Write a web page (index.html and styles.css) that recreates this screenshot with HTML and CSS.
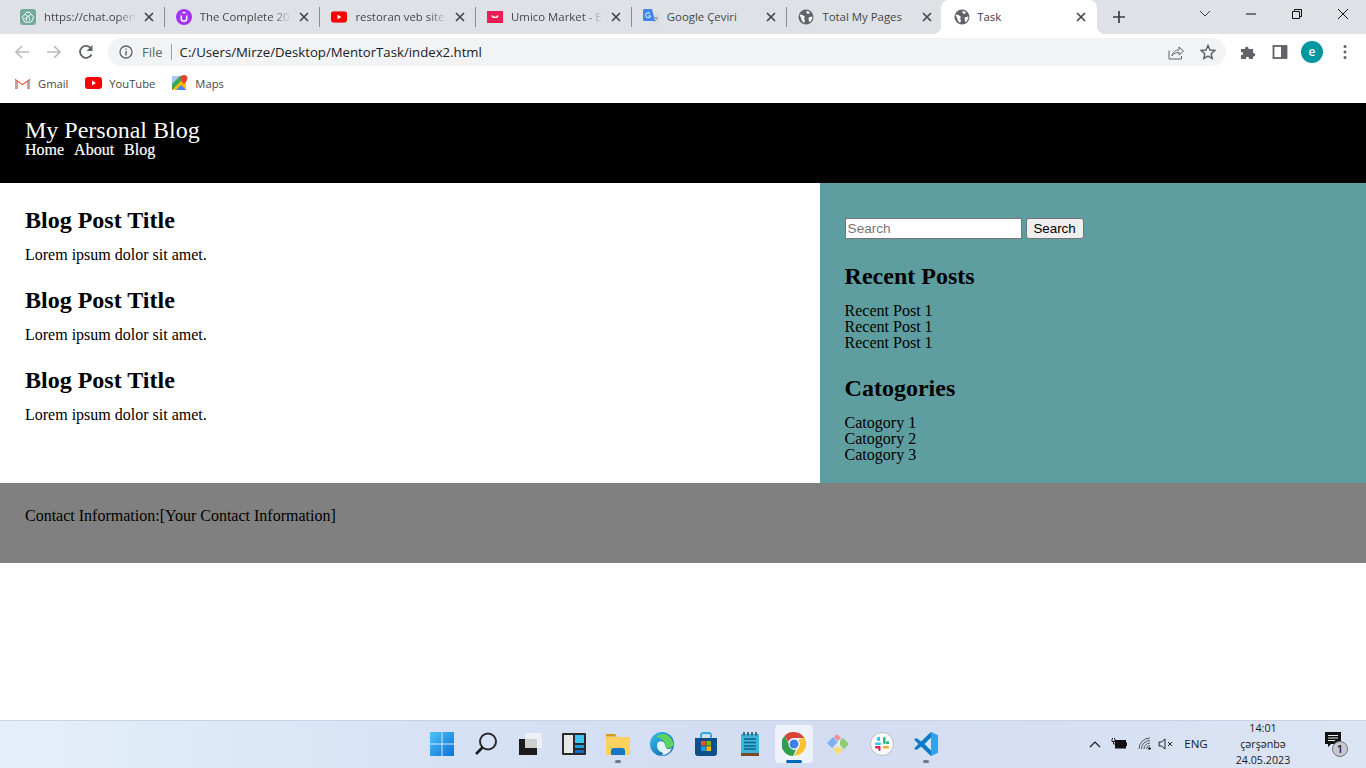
FILE: index.html
```html
<!DOCTYPE html>
<html lang="en">
<head>
  <meta charset="UTF-8">
  <meta name="viewport" content="width=device-width, initial-scale=1.0">
  <title>Task</title>
  <link rel="stylesheet" href="styles.css">
</head>
<body>
  <svg class="defs" width="0" height="0">
    <symbol id="globe" viewBox="0 0 16 16">
      <circle cx="8" cy="8" r="7.500" fill="#5f6368"/>
      <path d="M1.500 5.500l3 .5 2.500 2-1 1.500 1 2-1 2.500-2-2-1-3zM8.500 2l2.500.5 1 1.500-2 1-1.500-1zM10.500 8.500l3.500-1 .5 1.500-2 3.500-1.500.5z" fill="#fff"/>
    </symbol>
    <symbol id="yt" viewBox="0 0 17 12">
      <rect width="17" height="12" rx="3" fill="#f00"/>
      <path d="M7 3.500v5l4-2.500z" fill="#fff"/>
    </symbol>
    <symbol id="close" viewBox="0 0 10 10">
      <path d="M1 1l8 8M9 1l-8 8" stroke="#45474a" stroke-width="1.700" fill="none"/>
    </symbol>
  </svg>

  <div class="tabstrip">
    <div class="tab">
      <svg class="fav" viewBox="0 0 16 16"><rect width="16" height="16" rx="3" fill="#74aa9c"/><path d="M8 3a3 3 0 0 1 3 2.500 3 3 0 0 1 1.500 5A3 3 0 0 1 8 13a3 3 0 0 1-4.500-2.500 3 3 0 0 1 1.500-5A3 3 0 0 1 8 3z" fill="none" stroke="#fff"/><path d="M5 5.500l4.500 2.500v4M11 5.500L6.500 8v4M3.500 10.500L8 8" fill="none" stroke="#fff" stroke-width=".7"/></svg>
      <span class="tab-title">https://chat.open</span>
      <svg class="tab-x"><use href="#close"/></svg>
    </div>
    <div class="tab">
      <svg class="fav" viewBox="0 0 16 16"><circle cx="8" cy="8" r="8" fill="#a435f0"/><path d="M5.300 6.500v3.200c0 3.400 5.400 3.400 5.400 0V6.500" fill="none" stroke="#fff" stroke-width="1.500"/><path d="M8 2.500l2.700 1.700H5.300z" fill="#fff"/></svg>
      <span class="tab-title">The Complete 20</span>
      <svg class="tab-x"><use href="#close"/></svg>
    </div>
    <div class="tab">
      <svg class="fav" viewBox="0 0 17 12"><use href="#yt"/></svg>
      <span class="tab-title">restoran veb site</span>
      <svg class="tab-x"><use href="#close"/></svg>
    </div>
    <div class="tab">
      <svg class="fav" viewBox="0 0 16 16"><rect y="2" width="16" height="12" fill="#ec1c54"/><path d="M5 6.500c.5 2.500 5.500 2.500 6 0" fill="none" stroke="#fff" stroke-width="1.300"/></svg>
      <span class="tab-title">Umico Market - E</span>
      <svg class="tab-x"><use href="#close"/></svg>
    </div>
    <div class="tab">
      <svg class="fav" viewBox="0 0 16 16"><path d="M7 4h9v12H9z" fill="#dadce0"/><path d="M1 0h8l3 12H1a1 1 0 0 1-1-1V1a1 1 0 0 1 1-1z" fill="#4285f4"/><path d="M7 4.500a2.500 2.500 0 1 0 .6 2.400H5.500" fill="none" stroke="#fff" stroke-width="1"/><path d="M11 9h4M13 8v1M14 9c-.5 2-2 3-3 3.500" fill="none" stroke="#80868b" stroke-width=".8"/></svg>
      <span class="tab-title tab-full">Google Çeviri</span>
      <svg class="tab-x"><use href="#close"/></svg>
    </div>
    <div class="tab">
      <svg class="fav"><use href="#globe"/></svg>
      <span class="tab-title tab-full">Total My Pages</span>
      <svg class="tab-x"><use href="#close"/></svg>
    </div>
    <div class="tab tab-active">
      <svg class="fav"><use href="#globe"/></svg>
      <span class="tab-title tab-full">Task</span>
      <svg class="tab-x"><use href="#close"/></svg>
    </div>
    <svg class="new-tab" viewBox="0 0 12 12"><path d="M6 0v12M0 6h12" stroke="#3c4043" stroke-width="1.700"/></svg>
    <div class="win-controls">
      <svg class="win-btn" viewBox="0 0 46 16"><path d="M18 5l5 5 5-5" fill="none" stroke="#3c4043"/></svg>
      <svg class="win-btn" viewBox="0 0 46 16"><path d="M18 8h10" stroke="#111" stroke-width="1"/></svg>
      <svg class="win-btn" viewBox="0 0 46 16"><path d="M18.500 5.500h7v7h-7zM20.500 5.500v-2h7v7h-2" fill="none" stroke="#111"/></svg>
      <svg class="win-btn" viewBox="0 0 46 16"><path d="M18 3l10 10M28 3L18 13" stroke="#111"/></svg>
    </div>
  </div>

  <div class="toolbar">
    <svg class="nav-btn" viewBox="0 0 16 16"><path d="M15 8H2M8 2L2 8l6 6" fill="none" stroke="#babcbe" stroke-width="1.700"/></svg>
    <svg class="nav-btn" viewBox="0 0 16 16"><path d="M1 8h13M8 2l6 6-6 6" fill="none" stroke="#babcbe" stroke-width="1.700"/></svg>
    <svg class="nav-btn" viewBox="0 0 16 16"><path d="M13.500 10.500A6 6 0 1 1 13 4.500" fill="none" stroke="#5f6368" stroke-width="1.800"/><path d="M14.500 1v6h-6z" fill="#5f6368"/></svg>
    <div class="omnibox">
      <svg class="info" viewBox="0 0 14 14"><circle cx="7" cy="7" r="6" fill="none" stroke="#5f6368" stroke-width="1.300"/><path d="M7 6v4.500M7 3.500v1.300" stroke="#5f6368" stroke-width="1.400"/></svg>
      <span class="scheme">File</span>
      <span class="url">C:/Users/Mirze/Desktop/MentorTask/index2.html</span>
      <svg class="omni-icon" viewBox="0 0 16 16"><path d="M1 6.500V15h12.500v-3" fill="none" stroke="#5f6368"/><path d="M4 12c.5-4 3.500-6 7-6V3l4.500 4-4.500 4V8.500C8 8.300 5.500 9.500 4 12z" fill="none" stroke="#5f6368"/></svg>
      <svg class="omni-icon" viewBox="0 0 16 16"><path d="M8 1.500l2 4.500 4.800.5-3.600 3.200 1 4.800L8 12.100l-4.200 2.400 1-4.800L1.200 6.500 6 6z" fill="none" stroke="#5f6368" stroke-width="1.500"/></svg>
    </div>
    <svg class="tool-icon" viewBox="0 0 16 16"><path d="M1 5h4c-.5-3 4-3 3.500 0H13v4c3-.5 3 4 0 3.500V15H9c.5-3-3.500-3-3 0H1v-4c3 .5 3-3.500 0-3z" fill="#5f6368"/></svg>
    <svg class="tool-icon" viewBox="0 0 16 16"><rect x="1.500" y="2" width="13" height="12" fill="none" stroke="#5f6368" stroke-width="1.800"/><rect x="9" y="2" width="6" height="12" fill="#5f6368"/></svg>
    <span class="avatar">e</span>
    <svg class="menu-dots" viewBox="0 0 4 16"><circle cx="2" cy="2.500" r="1.500" fill="#5f6368"/><circle cx="2" cy="8" r="1.500" fill="#5f6368"/><circle cx="2" cy="13.500" r="1.500" fill="#5f6368"/></svg>
  </div>

  <div class="bookmarks">
    <span class="bookmark">
      <svg class="bm-gmail" viewBox="0 0 16 12"><path d="M0 12V1.500L8 7l8-5.500V12h-3V5L8 8.500 3 5v7z" fill="#ea4335"/><path d="M0 12h3V5L0 2.500z" fill="#c5a5a0"/><path d="M13 12h3V2.500L13 5z" fill="#c5a5a0"/></svg>
      Gmail
    </span>
    <span class="bookmark">
      <svg class="bm-yt" viewBox="0 0 17 12"><use href="#yt"/></svg>
      YouTube
    </span>
    <span class="bookmark">
      <svg class="bm-maps" viewBox="0 0 16 16"><rect y="1" width="14" height="14" fill="#34a853"/><path d="M0 15L14 1v14z" fill="#fbbc04"/><path d="M4 15l5-5 5 5z" fill="#4285f4"/><path d="M0 1h8L0 9z" fill="#a8c7fa"/><path d="M12 0a3.500 3.500 0 0 1 3.500 3.500C15.500 6 12 9 12 9S8.500 6 8.500 3.500A3.500 3.500 0 0 1 12 0z" fill="#ea4335"/></svg>
      Maps
    </span>
  </div>

  <header class="site-header">
    <h1>My Personal Blog</h1>
    <nav class="site-nav">
      <a>Home</a>
      <a>About</a>
      <a>Blog</a>
    </nav>
  </header>

  <div class="content">
    <main class="posts">
      <article class="post">
        <h2>Blog Post Title</h2>
        <p>Lorem ipsum dolor sit amet.</p>
      </article>
      <article class="post">
        <h2>Blog Post Title</h2>
        <p>Lorem ipsum dolor sit amet.</p>
      </article>
      <article class="post">
        <h2>Blog Post Title</h2>
        <p>Lorem ipsum dolor sit amet.</p>
      </article>
    </main>
    <aside class="sidebar">
      <form class="search">
        <input class="search-input" type="text" placeholder="Search">
        <button class="search-btn" type="button">Search</button>
      </form>
      <h2>Recent Posts</h2>
      <ul class="side-list">
        <li>Recent Post 1</li>
        <li>Recent Post 1</li>
        <li>Recent Post 1</li>
      </ul>
      <h2>Catogories</h2>
      <ul class="side-list">
        <li>Catogory 1</li>
        <li>Catogory 2</li>
        <li>Catogory 3</li>
      </ul>
    </aside>
  </div>

  <footer class="site-footer">
    <p>Contact Information:[Your Contact Information]</p>
  </footer>

  <div class="blank"></div>

  <div class="taskbar">
    <div class="task-icons">
      <span class="task-item">
        <svg class="task-svg" viewBox="0 0 24 24"><defs><linearGradient id="winblue" x1="0" y1="0" x2="1" y2="1"><stop offset="0" stop-color="#4fc4f7"/><stop offset="1" stop-color="#0a6fd8"/></linearGradient></defs><path d="M0 0h11.500v11.500H0zM12.500 0H24v11.500H12.500zM0 12.500h11.500V24H0zM12.500 12.500H24V24H12.500z" fill="url(#winblue)"/></svg>
      </span>
      <span class="task-item">
        <svg class="task-svg" viewBox="0 0 24 24"><circle cx="14" cy="9.500" r="8" fill="none" stroke="#2a2a2a" stroke-width="2"/><path d="M8.500 15.500L2 22" stroke="#1c1c1c" stroke-width="2.600"/></svg>
      </span>
      <span class="task-item">
        <svg class="task-svg" viewBox="0 0 24 24"><rect x="1" y="7" width="18" height="16" fill="#1b1b1b"/><rect x="7" y="1" width="17" height="15" fill="#eef0f5"/><rect x="7" y="7" width="12" height="9" fill="#cfcfcf"/></svg>
      </span>
      <span class="task-item">
        <svg class="task-svg" viewBox="0 0 24 24"><rect width="24" height="22" y="1" rx="1" fill="#2a2a2a"/><rect x="2" y="3" width="9" height="18" fill="#e8e8e8"/><rect x="13" y="3" width="9" height="8" fill="#3fc5f5"/><rect x="13" y="13" width="9" height="3" fill="#1ba1e2"/><rect x="13" y="18" width="9" height="3" fill="#0a6fc0"/></svg>
      </span>
      <span class="task-item has-dot">
        <svg class="task-svg" viewBox="0 0 24 24"><path d="M0 3a1 1 0 0 1 1-1h8l2 2.500H0z" fill="#d79a0b"/><path d="M0 5h24v17a1 1 0 0 1-1 1H1a1 1 0 0 1-1-1z" fill="#fdd15d"/><path d="M5 23v-4a3 3 0 0 1 3-3h8a3 3 0 0 1 3 3v4z" fill="#1476c6"/></svg>
      </span>
      <span class="task-item">
        <svg class="task-svg" viewBox="0 0 24 24"><defs><linearGradient id="edge" x1="0" y1="0" x2="1" y2="1"><stop offset="0" stop-color="#35c1f1"/><stop offset="1" stop-color="#0c59a4"/></linearGradient></defs><circle cx="12" cy="12" r="12" fill="url(#edge)"/><path d="M6 5c5-6 15-3 17.500 6 .5 3-1.500 5-5 5-3 0-4-1-3.500-2.500C16 10 12 6 6 5z" fill="#5fd35f"/><path d="M7 13c0-5 8-5 8 .5 0 3 4 4.500 7 2.500-2 5-7 8-12 7 4 0 4-2 1-3-3-1-4-4-4-7z" fill="#e3f5fb"/></svg>
      </span>
      <span class="task-item">
        <svg class="task-svg" viewBox="0 0 24 24"><path d="M7 6V3a2 2 0 0 1 2-2h6a2 2 0 0 1 2 2v3" fill="none" stroke="#2ba8e0" stroke-width="1.800"/><path d="M1 6h22v15a3 3 0 0 1-3 3H4a3 3 0 0 1-3-3z" fill="#0e4f8a"/><path d="M7 9h4.600v4.600H7z" fill="#f25022"/><path d="M12.400 9H17v4.600h-4.600z" fill="#7fba00"/><path d="M7 14.400h4.600V19H7z" fill="#00a4ef"/><path d="M12.400 14.400H17V19h-4.600z" fill="#ffb900"/></svg>
      </span>
      <span class="task-item">
        <svg class="task-svg" viewBox="0 0 24 24"><rect x="3" y="2" width="18" height="19" fill="#3db4d8"/><path d="M6 7h12M6 10.500h12M6 14h12M6 17h12" stroke="#0e5f86" stroke-width="1.500"/><path d="M6 0v3.500M10 0v3.500M14 0v3.500M18 0v3.500" stroke="#174a66" stroke-width="1.500"/><rect x="3" y="21" width="18" height="3" fill="#7a4a26"/></svg>
      </span>
      <span class="task-item task-active">
        <svg class="task-svg" viewBox="0 0 24 24"><path d="M12 0a12 12 0 0 1 10.400 6H12a6 6 0 0 0-5.700 4.100L2.500 4A12 12 0 0 1 12 0z" fill="#db4437"/><path d="M22.400 6A12 12 0 0 1 12 24l5.200-9A6 6 0 0 0 16 8.200z" fill="#fbc02d" transform="translate(0 -.2)"/><path d="M2.500 4l5 9a6 6 0 0 0 6.500 4.800L11 24A12 12 0 0 1 2.500 4z" fill="#2e9e4f"/><circle cx="12" cy="12" r="5.500" fill="#fff"/><circle cx="12" cy="12" r="4.500" fill="#3f7fec"/></svg>
      </span>
      <span class="task-item">
        <svg class="task-svg" viewBox="0 0 24 24"><path d="M6 12l6-6 6 6-6 6z" fill="#fff" opacity=".4"/><path d="M1 11l6-6 5 5-6 6z" fill="#7fb2f5"/><path d="M8 5l3-3 4 4-3 3z" fill="#ef8f8f"/><path d="M14 9l3-3 6 6-5 5-4-4z" fill="#8fce6f"/><path d="M7 17l5-3 5 4-5 5z" fill="#f7dc7c"/></svg>
      </span>
      <span class="task-item">
        <svg class="task-svg" viewBox="0 0 24 24"><circle cx="12" cy="12" r="11.500" fill="#fafafa" stroke="#b9bcc2"/><path d="M10 5v4H8a2 2 0 1 1 2-4z" fill="#36c5f0"/><rect x="5" y="10.500" width="6" height="2.500" rx="1.200" fill="#36c5f0"/><path d="M19 10v2h-3a1 1 0 1 1 3-2z" fill="#2eb67d"/><rect x="13" y="5" width="2.500" height="7" rx="1.200" fill="#2eb67d"/><rect x="13" y="14" width="6" height="2.500" rx="1.200" fill="#ecb22e"/><rect x="10.500" y="14" width="2" height="5" rx="1" fill="#e01e5a" transform="translate(-2 0)"/><rect x="5" y="14" width="5" height="2.500" rx="1.200" fill="#e01e5a"/></svg>
      </span>
      <span class="task-item has-dot">
        <svg class="task-svg" viewBox="0 0 24 24"><path d="M17 0l7 3.500v17L17 24 7 14.500 2.500 18 0 16.500 4.500 12 0 7.500 2.500 6 7 9.500z" fill="#0a7cc9"/><path d="M17 5.500L10.500 12l6.500 6.500z" fill="#cfe8fa"/><path d="M17 0l7 3.500v17L17 24z" fill="#2fa4ec"/></svg>
      </span>
    </div>
    <div class="tray">
      <svg class="tray-chev" viewBox="0 0 12 8"><path d="M1 7l5-5 5 5" fill="none" stroke="#1a1a1a" stroke-width="1.200"/></svg>
      <svg class="tray-batt" viewBox="0 0 16 12"><path d="M1 1v2.500h3V1M2.500 3.500V6h2M1.500 1V0M3.500 1V0" stroke="#111" fill="none" stroke-width=".9"/><rect x="4.500" y="2.500" width="10" height="7.500" fill="#111" stroke="#111"/><rect x="15" y="4.500" width="1" height="3.500" fill="#111"/></svg>
      <svg class="tray-wifi" viewBox="0 0 14 14"><path d="M1 12A11 11 0 0 1 12 1M3.500 12A8.500 8.500 0 0 1 12 3.500M6 12a6 6 0 0 1 6-6M8.500 12A3.500 3.500 0 0 1 12 8.500" fill="none" stroke="#333" stroke-width=".8"/><circle cx="11.500" cy="11.500" r="1.300" fill="#111"/></svg>
      <svg class="tray-vol" viewBox="0 0 16 12"><path d="M1 4h2.500L7 1v10L3.500 8H1z" fill="none" stroke="#222"/><path d="M10 4l4 4M14 4l-4 4" stroke="#222"/></svg>
      <span class="tray-lang">ENG</span>
      <div class="clock">
        <span>14:01</span>
        <span>çərşənbə</span>
        <span>24.05.2023</span>
      </div>
      <div class="notif">
        <svg class="notif-icon" viewBox="0 0 16 16"><path d="M0 0h16v12H6l-3 3v-3H0z" fill="#111"/><path d="M3 3.500h10M3 6h10M3 8.500h7" stroke="#e6ebf5"/></svg>
        <span class="notif-count">1</span>
      </div>
    </div>
  </div>
</body>
</html>
```

FILE: styles.css
```css
/* General styling */
* {
  box-sizing: border-box;
}

body {
  margin: 0;
  height: 768px;
  overflow: hidden;
  display: flex;
  flex-direction: column;
  background-color: #fff;
  font-family: "Liberation Serif", "Times New Roman", serif;
  color: #000;
}

.defs {
  position: absolute;
}

/* Browser tab strip */
.tabstrip {
  height: 34px;
  flex: none;
  display: flex;
  align-items: center;
  padding-left: 9px;
  background-color: #dee1e6;
  font-family: "Open Sans", sans-serif;
  font-size: 11.400px;
}

.tab {
  width: 155.700px;
  height: 34px;
  flex: none;
  display: flex;
  align-items: center;
  padding-left: 11px;
  color: #45474a;
}

/* separator between tabs */
.tab::after {
  content: "";
  width: 1px;
  height: 20px;
  flex: none;
  margin-left: 10px;
  background-color: #8a8d91;
}

.tab:nth-child(6)::after {
  background-color: transparent;
}

.tab-active {
  width: 156px;
  margin-left: -2px;
  padding: 0 11px 0 13px;
  position: relative;
  background-color: #fff;
  border-radius: 8px 8px 0 0;
  color: #3c4043;
}

.tab-active::before,
.tab-active::after {
  content: "";
  position: absolute;
  bottom: 0;
  width: 8px;
  height: 8px;
  margin: 0;
}

.tab-active::before {
  left: -8px;
  background: radial-gradient(circle at 0 0, transparent 8px, #fff 8px);
}

.tab-active::after {
  right: -8px;
  background: radial-gradient(circle at 100% 0, transparent 8px, #fff 8px);
}

.fav {
  width: 16px;
  height: 16px;
  flex: none;
  margin-right: 8px;
}

.tab-active .fav {
  margin-right: 7px;
}

.tab-title {
  flex: 1;
  margin-bottom: 2px;
  overflow: hidden;
  white-space: nowrap;
  -webkit-mask-image: linear-gradient(to right, #000 80%, transparent 100%);
  mask-image: linear-gradient(to right, #000 80%, transparent 100%);
}

.tab-full {
  -webkit-mask-image: none;
  mask-image: none;
}

.tab-x {
  width: 10px;
  height: 10px;
  flex: none;
  margin-left: 8px;
}

.new-tab {
  width: 12px;
  height: 12px;
  margin-left: 16px;
}

.win-controls {
  margin-left: auto;
  display: flex;
  padding-bottom: 6px;
}

.win-btn {
  width: 46px;
  height: 16px;
}

/* Toolbar */
.toolbar {
  height: 36px;
  flex: none;
  display: flex;
  align-items: center;
  padding-left: 14px;
  background-color: #fff;
  font-family: "Open Sans", sans-serif;
}

.nav-btn {
  width: 16px;
  height: 16px;
  margin-right: 16px;
}

.omnibox {
  width: 1118px;
  height: 28px;
  margin-left: -2px;
  display: flex;
  align-items: center;
  padding: 0 10px 0 11px;
  border-radius: 14px;
  background-color: #f1f3f4;
}

.info {
  width: 14px;
  height: 14px;
  flex: none;
}

.scheme {
  margin-left: 9px;
  padding-right: 8px;
  border-right: 1px solid #9aa0a6;
  font-size: 13px;
  line-height: 16px;
  color: #5f6368;
}

.url {
  flex: 1;
  margin-left: 8px;
  font-size: 13.200px;
  color: #202124;
}

.omni-icon {
  width: 16px;
  height: 16px;
  margin-left: 16px;
}

.tool-icon {
  width: 16px;
  height: 16px;
  margin-left: 14px;
  margin-right: 2px;
}

.avatar {
  width: 22px;
  height: 22px;
  margin-left: 11px;
  border-radius: 50%;
  background-color: #00979f;
  color: #fff;
  font-size: 12px;
  font-weight: 600;
  line-height: 21px;
  text-align: center;
}

.menu-dots {
  width: 4px;
  height: 16px;
  margin-left: 20px;
}

/* Bookmarks */
.bookmarks {
  height: 33px;
  flex: none;
  display: flex;
  align-items: center;
  padding: 0 0 7px 15px;
  background-color: #fff;
  font-family: "Open Sans", sans-serif;
  font-size: 11.200px;
  color: #45474a;
}

.bookmark {
  display: flex;
  align-items: center;
  margin-right: 17px;
}

.bm-gmail {
  width: 15px;
  height: 12px;
  margin-right: 8px;
}

.bm-yt {
  width: 17px;
  height: 12px;
  margin-right: 7px;
}

.bm-maps {
  width: 16px;
  height: 16px;
  margin-right: 7px;
}

/* Blog header */
.site-header {
  height: 80px;
  flex: none;
  padding: 15px 25px;
  background-color: #000;
  color: #fff;
}

.site-header h1 {
  margin: 0;
  font-size: 24px;
  font-weight: normal;
  line-height: 24px;
}

.site-nav {
  display: flex;
  gap: 10px;
  font-size: 16px;
  line-height: 16px;
  -webkit-text-stroke: 0.2px #fff;
}

/* Main area */
.content {
  height: 300px;
  flex: none;
  display: flex;
}

.posts {
  width: 60%;
  padding: 24px 25px 0;
}

.post {
  height: 80px;
}

.post h2,
.sidebar h2 {
  margin: 0;
  font-size: 24px;
  font-weight: bold;
}

.post p {
  margin: 12px 0 0;
  font-size: 16px;
}

.sidebar {
  width: 40%;
  padding: 35px 25px 0;
  background-color: #5f9ea0;
}

.search {
  display: flex;
  gap: 4px;
  height: 21px;
  margin-bottom: 24px;
}

.search-input {
  width: 177px;
  height: 21px;
  padding: 1px 2px;
  border: 1px solid #767676;
  background-color: #fff;
  font-family: "Liberation Sans", Arial, sans-serif;
  font-size: 13.600px;
}

.search-btn {
  width: 58px;
  height: 21px;
  padding: 0;
  border: 1px solid #767676;
  border-radius: 3px;
  background-color: #efefef;
  font-family: "Liberation Sans", Arial, sans-serif;
  font-size: 13.333px;
  color: #000;
}

.side-list {
  list-style: none;
  margin: 13px 0 24px;
  padding: 0;
  font-size: 16px;
  line-height: 16px;
}

/* Blog footer */
.site-footer {
  height: 80px;
  flex: none;
  padding: 24px 25px;
  background-color: #808080;
}

.site-footer p {
  margin: 0;
  font-size: 16px;
}

.blank {
  flex: 1;
}

/* Windows taskbar */
.taskbar {
  height: 48px;
  flex: none;
  display: flex;
  align-items: center;
  justify-content: center;
  position: relative;
  border-top: 1px solid #c9d3e6;
  background: linear-gradient(to right, #e4eff9 0%, #d5e1f4 35%, #d3dcf1 60%, #dbe5f4 100%);
  font-family: "Open Sans", sans-serif;
  font-size: 11.500px;
  color: #1a1a1a;
}

.task-icons {
  display: flex;
  gap: 6px;
  margin: 0 0 1px 2px;
}

.task-item {
  width: 38px;
  height: 38px;
  display: flex;
  align-items: center;
  justify-content: center;
  position: relative;
  border-radius: 4px;
}

.task-svg {
  width: 24px;
  height: 24px;
}

.has-dot::after {
  content: "";
  position: absolute;
  left: 16px;
  bottom: 0;
  width: 6px;
  height: 3px;
  border-radius: 2px;
  background-color: #707784;
}

.task-active {
  background-color: #eef2fa;
}

.task-active::after {
  content: "";
  position: absolute;
  left: 11px;
  bottom: 0;
  width: 16px;
  height: 3px;
  border-radius: 2px;
  background-color: #0067c0;
}

.tray {
  position: absolute;
  right: 0;
  top: 0;
  height: 45px;
  display: flex;
  align-items: center;
}

.tray-chev {
  width: 12px;
  height: 8px;
  margin-right: 10px;
}

.tray-batt {
  width: 16px;
  height: 12px;
  margin-right: 11px;
}

.tray-wifi {
  width: 14px;
  height: 14px;
  margin-right: 6px;
}

.tray-vol {
  width: 16px;
  height: 12px;
}

.tray-lang {
  width: 44px;
  text-align: center;
}

.clock {
  width: 68px;
  margin-left: 11px;
  display: flex;
  flex-direction: column;
  align-items: center;
  font-size: 10.700px;
  line-height: 16px;
}

.notif {
  width: 24px;
  height: 24px;
  margin: 0 19px 0 26px;
  position: relative;
}

.notif-icon {
  width: 16px;
  height: 16px;
  margin-left: 2px;
}

.notif-count {
  position: absolute;
  left: 9px;
  top: 9px;
  width: 16px;
  height: 16px;
  border-radius: 50%;
  border: 1px solid #777;
  background-color: #c4c9d4;
  font-size: 11px;
  font-weight: 600;
  line-height: 14px;
  text-align: center;
}
```
